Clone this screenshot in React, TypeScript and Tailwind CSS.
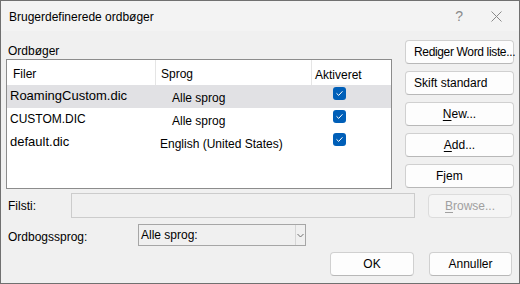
import React from 'react'

const font = { fontFamily: '"Liberation Sans", Arial, sans-serif' }

function Check() {
  return (
    <span className="flex h-[13px] w-[13px] items-center justify-center rounded-[3px] bg-[#005fb8]">
      <svg width="9" height="9" viewBox="0 0 9 9" fill="none">
        <path d="M1.8 4.6 L3.7 6.4 L7.2 2.6" stroke="white" strokeWidth="1" strokeLinecap="round" strokeLinejoin="round" />
      </svg>
    </span>
  )
}

function Btn({ children, className = '' }: { children: React.ReactNode; className?: string }) {
  return (
    <div
      className={
        'flex h-[24px] items-center rounded-[4px] border border-[#d0d0d0] border-b-[#b8b8b8] bg-[#fdfdfd] text-[12px] text-black ' +
        className
      }
    >
      {children}
    </div>
  )
}

const rows = [
  { file: 'RoamingCustom.dic', lang: 'Alle sprog', langPad: 'pl-[15px]', sel: true, fileSize: 'text-[13px]' },
  { file: 'CUSTOM.DIC', lang: 'Alle sprog', langPad: 'pl-[15px]', sel: false, fileSize: 'text-[12px]' },
  { file: 'default.dic', lang: 'English (United States)', langPad: 'pl-[3px]', sel: false, fileSize: 'text-[13px]' },
]

export default function App() {
  return (
    <div
      className="flex h-[284px] w-[520px] flex-col border border-[#707070] bg-[#f0f0f0] text-black"
      style={font}
    >
      {/* title bar */}
      <div className="flex h-[30px] shrink-0 items-center bg-[#f3f3f3] pl-[8px] text-[12px]">
        <span className="pt-[2px]">Brugerdefinerede ordbøger</span>
        <span className="ml-auto mr-[28px] text-[14px] leading-none text-[#8a8a8a]">?</span>
        <svg className="mr-[17px]" width="11" height="11" viewBox="0 0 11 11">
          <path d="M0.5 0.5 L10.5 10.5 M10.5 0.5 L0.5 10.5" stroke="#8a8a8a" strokeWidth="1" />
        </svg>
      </div>

      <div className="flex flex-col px-[5px]">
        {/* top section */}
        <div className="flex pt-[9px]">
          <div className="flex w-[386px] flex-col">
            <div className="h-[19px] pl-[2px] pt-[4px] text-[12px] leading-[14px]">Ordbøger</div>
            <div className="h-[130px] border border-[#8c8c8c] bg-white">
              <div className="flex h-[25px] text-[12px]">
                <div className="flex w-[149px] items-center border-r border-[#e5e5e5] pl-[6px] pt-[2px]">Filer</div>
                <div className="flex w-[156px] items-center border-r border-[#e5e5e5] pl-[5px] pt-[2px]">Sprog</div>
                <div className="flex items-start pl-[3px] pt-[6px]">Aktiveret</div>
              </div>
              {rows.map((r) => (
                <div key={r.file} className={'flex h-[23px] ' + (r.sel ? 'bg-[#e1e1e4]' : '')}>
                  <div className={'flex w-[150px] items-center pl-[3px] pb-[1px] ' + r.fileSize}>{r.file}</div>
                  <div className={'flex w-[156px] items-center pt-[3px] text-[12px] ' + r.langPad}>{r.lang}</div>
                  <div className="pl-[20px] pt-[2px]">
                    <Check />
                  </div>
                </div>
              ))}
            </div>
          </div>

          <div className="ml-[13px] flex w-[109px] flex-col gap-[7px]">
            <Btn className="whitespace-nowrap pl-[8px] text-[11px] tracking-[-0.35px]">Rediger Word liste...</Btn>
            <Btn className="pl-[8px]">Skift standard</Btn>
            <Btn className="justify-center">
              <span>
                <span className="underline underline-offset-2">N</span>ew...
              </span>
            </Btn>
            <Btn className="justify-center">
              <span>
                <span className="underline underline-offset-2">A</span>dd...
              </span>
            </Btn>
            <Btn className="pl-[30px]">Fjem</Btn>
          </div>
        </div>

        {/* Filsti */}
        <div className="mt-[4px] flex items-center">
          <div className="w-[65px] pl-[2px] text-[12px]">Filsti:</div>
          <div className="h-[25px] w-[344px] border border-[#cccccc] bg-[#f0f0f0]" />
          <div className="ml-[13px] flex h-[24px] w-[84px] items-center justify-center rounded-[4px] border border-[#dcdcdc] bg-[#f5f5f5] text-[12px] text-[#a0a0a0]">
            <span>
              <span className="underline underline-offset-2">B</span>rowse...
            </span>
          </div>
        </div>

        {/* Ordbogssprog */}
        <div className="mt-[6px] flex items-center">
          <div className="w-[132px] pl-[2px] pt-[4px] text-[12px]">Ordbogssprog:</div>
          <div className="flex h-[22px] w-[168px] items-center border border-[#a6a6a6] bg-[#f0f0f0] text-[12px]">
            <span className="pl-[2px]">Alle sprog:</span>
            <span className="ml-auto flex h-full w-[10px] items-center justify-center border-l border-[#d6d6d6]">
              <svg width="7" height="5" viewBox="0 0 7 5">
                <path d="M0.5 1 L3.5 4 L6.5 1" stroke="#707070" strokeWidth="1" fill="none" />
              </svg>
            </span>
          </div>
        </div>

        {/* OK / Annuller */}
        <div className="mt-[6px] flex justify-end gap-[15px] pr-[2px]">
          <Btn className="w-[84px] justify-center">OK</Btn>
          <Btn className="w-[83px] justify-center">Annuller</Btn>
        </div>
      </div>
    </div>
  )
}
